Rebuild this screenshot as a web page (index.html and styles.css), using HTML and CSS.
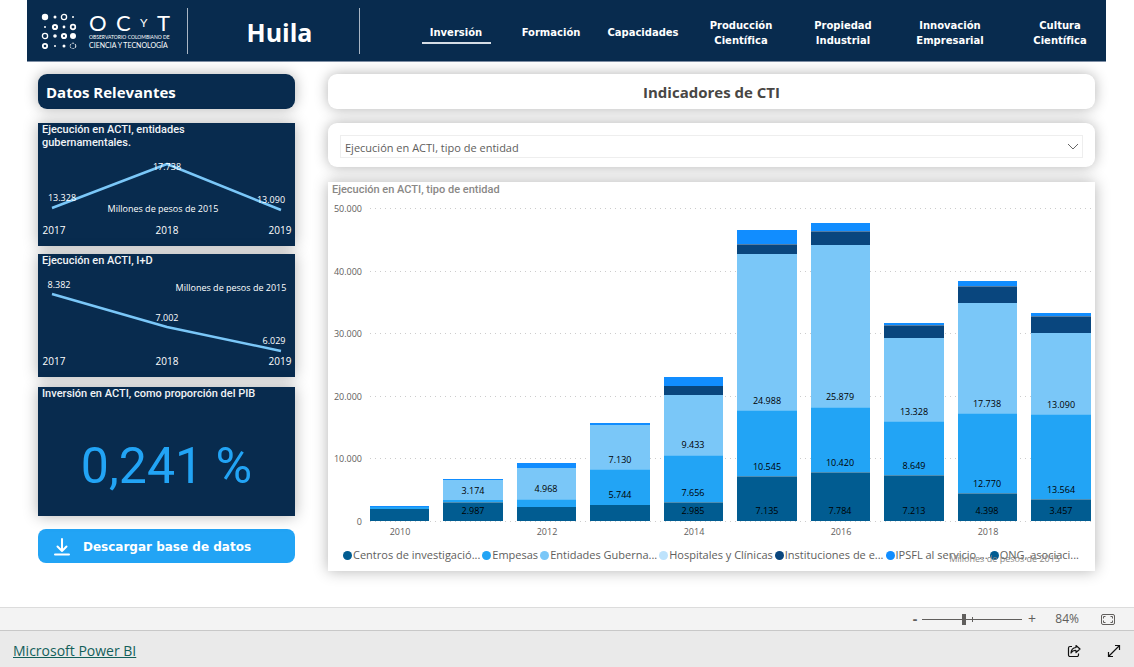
FILE: index.html
```html
<!DOCTYPE html>
<html lang="es">
<head>
<meta charset="utf-8">
<title>Huila - Indicadores de CTI</title>
<link rel="stylesheet" href="styles.css">
</head>
<body>
<div class="report">
  <header class="header">
    <div class="brand">
      <svg class="brand-dots" viewBox="0 0 36 36" aria-hidden="true">
        <g fill="#fff">
          <circle cx="4" cy="4" r="3.2"/><circle cx="14" cy="4" r="1.5"/><circle cx="32" cy="4" r="1"/>
          <circle cx="4" cy="14" r="1"/><circle cx="23" cy="14" r="1.4"/>
          <circle cx="14" cy="23" r="1.8"/><circle cx="32" cy="23" r="3"/>
          <circle cx="14" cy="33" r="1"/><circle cx="23" cy="33" r="1.5"/>
        </g>
        <g fill="none" stroke="#fff">
          <circle cx="23" cy="4" r="2.6" stroke-width="1.3"/>
          <circle cx="14" cy="14" r="2.1" stroke-width="2"/><circle cx="32" cy="14" r="2.3" stroke-width="1.7"/>
          <circle cx="4" cy="23" r="2.6" stroke-width="1.3"/><circle cx="23" cy="23" r="2.1" stroke-width="2"/>
          <circle cx="4" cy="33" r="2.2" stroke-width="1.8"/><circle cx="32" cy="33" r="2.8" stroke-width="1" stroke-dasharray="2 1"/>
        </g>
      </svg>
      <div class="brand-text">
        <div class="brand-name"><span>O</span><span>C</span><span class="small">Y</span><span>T</span></div>
        <div class="brand-line1">OBSERVATORIO COLOMBIANO DE</div>
        <div class="brand-line2">CIENCIA Y TECNOLOGÍA</div>
      </div>
    </div>
    <h1 class="region">Huila</h1>
    <nav class="nav">
      <a class="active" href="#inversion">Inversión</a>
      <a href="#formacion">Formación</a>
      <a href="#capacidades">Capacidades</a>
      <a href="#produccion">Producción<br>Científica</a>
      <a href="#propiedad">Propiedad<br>Industrial</a>
      <a href="#innovacion">Innovación<br>Empresarial</a>
      <a href="#cultura">Cultura<br>Científica</a>
    </nav>
  </header>

  <main class="content">
    <section class="side">
      <h2 class="side-title">Datos Relevantes</h2>

      <article class="card trend">
        <h3>Ejecución en ACTI, entidades<br>gubernamentales.</h3>
        <svg viewBox="0 0 257 123" role="img" aria-label="Ejecución en ACTI, entidades gubernamentales">
          <polyline class="line" points="14,85 129,41 243,87"/>
          <text x="24" y="78">13.328</text>
          <text x="129" y="47">17.738</text>
          <text x="233" y="80">13.090</text>
          <text x="125" y="89">Millones de pesos de 2015</text>
          <g class="years"><text x="16" y="111">2017</text><text x="129" y="111">2018</text><text x="242" y="111">2019</text></g>
        </svg>
      </article>

      <article class="card trend">
        <h3>Ejecución en ACTI, I+D</h3>
        <svg viewBox="0 0 257 123" role="img" aria-label="Ejecución en ACTI, I+D">
          <polyline class="line" points="14,40 129,73 243,97"/>
          <text x="21" y="34">8.382</text>
          <text x="129" y="67">7.002</text>
          <text x="236" y="90">6.029</text>
          <text x="193" y="37">Millones de pesos de 2015</text>
          <g class="years"><text x="16" y="111">2017</text><text x="129" y="111">2018</text><text x="242" y="111">2019</text></g>
        </svg>
      </article>

      <article class="card figure">
        <h3>Inversión en ACTI, como proporción del PIB</h3>
        <p>0,241 %</p>
      </article>

      <button class="download" type="button">
        <svg viewBox="0 0 16 18" aria-hidden="true"><path d="M8 1v12M3.500 8.500 8 13l4.500-4.500M1 16.500h14" fill="none" stroke="#fff" stroke-width="2" stroke-linecap="round" stroke-linejoin="round"/></svg>
        Descargar base de datos
      </button>
    </section>

    <section class="main">
      <h2 class="main-title">Indicadores de CTI</h2>

      <div class="slicer">
        <select aria-label="Indicador"><option>Ejecución en ACTI, tipo de entidad</option></select>
        <svg viewBox="0 0 12 8" aria-hidden="true"><path d="M1 1l5 5 5-5" fill="none" stroke="#666" stroke-width="1"/></svg>
      </div>

      <article class="chart">
        <h3>Ejecución en ACTI, tipo de entidad</h3>
        <svg viewBox="0 16 767 345" role="img" aria-label="Ejecución en ACTI por tipo de entidad, 2010 a 2019">
          <g class="grid">
            <path d="M42 26.500H763M42 89.500H763M42 151.500H763M42 214.500H763M42 276.500H763M42 339.500H763"/>
          </g>
          <g class="axis end">
            <text x="34" y="30">50.000</text><text x="34" y="93">40.000</text><text x="34" y="155">30.000</text>
            <text x="34" y="218">20.000</text><text x="34" y="280">10.000</text><text x="34" y="343">0</text>
          </g>
          <g class="centros">
            <rect x="42" y="327" width="59" height="12"/><rect x="115" y="320" width="60" height="19"/>
            <rect x="189" y="325" width="59" height="14"/><rect x="262" y="323" width="60" height="16"/>
            <rect x="336" y="320" width="59" height="19"/><rect x="409" y="294" width="60" height="45"/>
            <rect x="483" y="290" width="59" height="49"/><rect x="556" y="293" width="60" height="46"/>
            <rect x="630" y="311" width="59" height="28"/><rect x="703" y="317" width="60" height="22"/>
          </g>
          <g class="empresas">
            <rect x="42" y="325" width="59" height="2"/><rect x="115" y="318" width="60" height="2"/>
            <rect x="189" y="317" width="59" height="8"/><rect x="262" y="287" width="60" height="36"/>
            <rect x="336" y="273" width="59" height="47"/><rect x="409" y="228" width="60" height="66"/>
            <rect x="483" y="225" width="59" height="65"/><rect x="556" y="239" width="60" height="54"/>
            <rect x="630" y="231" width="59" height="80"/><rect x="703" y="232" width="60" height="85"/>
          </g>
          <g class="gobierno">
            <rect x="115" y="298" width="60" height="20"/>
            <rect x="189" y="286" width="59" height="31"/><rect x="262" y="243" width="60" height="44"/>
            <rect x="336" y="213" width="59" height="60"/><rect x="409" y="72" width="60" height="156"/>
            <rect x="483" y="63" width="59" height="162"/><rect x="556" y="156" width="60" height="83"/>
            <rect x="630" y="121" width="59" height="110"/><rect x="703" y="151" width="60" height="81"/>
          </g>
          <g class="educacion">
            <rect x="336" y="204" width="59" height="9"/><rect x="409" y="62" width="60" height="10"/>
            <rect x="483" y="49" width="59" height="14"/><rect x="556" y="143" width="60" height="13"/>
            <rect x="630" y="104" width="59" height="17"/><rect x="703" y="134" width="60" height="17"/>
          </g>
          <g class="ipsfl">
            <rect x="42" y="324" width="59" height="1"/><rect x="115" y="297" width="60" height="1"/>
            <rect x="189" y="281" width="59" height="5"/><rect x="262" y="241" width="60" height="2"/>
            <rect x="336" y="195" width="59" height="9"/><rect x="409" y="48" width="60" height="14"/>
            <rect x="483" y="41" width="59" height="8"/><rect x="556" y="141" width="60" height="2"/>
            <rect x="630" y="99" width="59" height="5"/><rect x="703" y="131" width="60" height="3"/>
          </g>
          <g class="seams">
            <path d="M115 320.500h60M189 317.500h59M262 287.500h60M336 273.500h59M409 228.500h60M483 225.500h59M556 239.500h60M630 231.500h59M703 232.500h60"/>
            <path d="M336 320.500h59M409 294.500h60M483 290.500h59M556 293.500h60M630 311.500h59M703 317.500h60"/>
            <path d="M409 62.500h60M483 49.500h59M556 143.500h60M630 104.500h59M703 134.500h60"/>
          </g>
          <g class="values">
            <text x="145" y="312">3.174</text><text x="145" y="332">2.987</text>
            <text x="218" y="310">4.968</text>
            <text x="292" y="281">7.130</text><text x="292" y="316">5.744</text>
            <text x="365" y="266">9.433</text><text x="365" y="314">7.656</text><text x="365" y="332">2.985</text>
            <text x="439" y="222">24.988</text><text x="439" y="288">10.545</text><text x="439" y="332">7.135</text>
            <text x="512" y="218">25.879</text><text x="512" y="284">10.420</text><text x="512" y="332">7.784</text>
            <text x="586" y="233">13.328</text><text x="586" y="287">8.649</text><text x="586" y="332">7.213</text>
            <text x="659" y="225">17.738</text><text x="659" y="305">12.770</text><text x="659" y="332">4.398</text>
            <text x="733" y="226">13.090</text><text x="733" y="311">13.564</text><text x="733" y="332">3.457</text>
          </g>
          <g class="axis">
            <text x="72" y="353">2010</text><text x="219" y="353">2012</text><text x="366" y="353">2014</text>
            <text x="513" y="353">2016</text><text x="660" y="353">2018</text>
          </g>
        </svg>
        <ul class="legend">
          <li class="k-centros">Centros de investigació...</li>
          <li class="k-empresas">Empesas</li>
          <li class="k-gobierno">Entidades Guberna...</li>
          <li class="k-hospitales">Hospitales y Clínicas</li>
          <li class="k-educacion">Instituciones de e...</li>
          <li class="k-ipsfl">IPSFL al servicio ...</li>
          <li class="k-centros">ONG, asociaci...</li>
        </ul>
        <p class="note">Millones de pesos de 2015</p>
      </article>
    </section>
  </main>
</div>

<div class="zoombar">
  <button type="button" aria-label="Alejar">-</button>
  <input type="range" min="0" max="100" value="42" aria-label="Zoom">
  <button type="button" aria-label="Acercar">+</button>
  <span class="percent">84%</span>
  <button class="fit" type="button" aria-label="Ajustar a la página">
    <svg viewBox="0 0 14 11"><g fill="none" stroke="#605e5c"><rect x=".5" y=".5" width="13" height="10" rx="1.500"/><path d="M2.500 4.500v-2h2M9.500 2.500h2v2M11.500 6.500v2h-2M4.500 8.500h-2v-2"/></g></svg>
  </button>
</div>
<footer class="footer">
  <a href="#powerbi">Microsoft Power BI</a>
  <div class="actions">
    <button type="button" aria-label="Compartir">
      <svg viewBox="0 0 14 14"><g fill="none" stroke="#111" stroke-width="1.200" stroke-linejoin="round"><path d="M5 2.500H3A1.500 1.500 0 0 0 1.500 4v7A1.500 1.500 0 0 0 3 12.500h7a1.500 1.500 0 0 0 1.500-1.500V9.500"/><path d="M9 1.500 13 5 9 8.500v-2C6.800 6.300 5.200 7 4 9 4.200 5.800 6 3.800 9 3.500z"/></g></svg>
    </button>
    <button type="button" aria-label="Pantalla completa">
      <svg viewBox="0 0 14 14"><path d="M1.500 12.500l11-11M8 1.500h4.500V6M1.500 8v4.500H6" fill="none" stroke="#111" stroke-width="1.200"/></svg>
    </button>
  </div>
</footer>
</body>
</html>
```
FILE: styles.css
```css
* { box-sizing: border-box; margin: 0; padding: 0; }

body {
  display: flex;
  flex-direction: column;
  min-height: 100vh;
  background: #fff;
  color: #605e5c;
  font-family: "Open Sans", "Noto Sans", sans-serif;
}

button { border: 0; background: none; color: inherit; font: inherit; }

.report { flex: 1; padding: 0 28px 32px 27px; }

/* Header */
.header {
  display: grid;
  grid-template-columns: 161px 172px 1fr;
  align-items: center;
  height: 62px;
  background: #082b4e;
  border-bottom: 1px solid #7f8fa5;
  color: #fff;
}

.brand, .region {
  display: flex;
  align-items: center;
  height: 46px;
  border-right: 1px solid #a9b6c4;
}

.brand { gap: 12px; padding-left: 14px; }
.brand-dots { width: 36px; height: 36px; flex: none; }
.brand-text { width: 84px; white-space: nowrap; }

.brand-name {
  display: flex;
  align-items: center;
  justify-content: space-between;
  padding-right: 3px;
  font: 22px/22px Lato, sans-serif;
}
.brand-name .small { font-size: 12px; }
.brand-line1 { font: 5px/7px Lato, sans-serif; }
.brand-line2 { font: 7px/8px Lato, sans-serif; }

.region { justify-content: center; font-size: 25px; font-weight: 700; padding: 2px 0 0 12px; }

.nav {
  display: grid;
  grid-template-columns: 84fr 106fr 78fr 118fr 86fr 128fr 92fr;
  align-items: center;
  padding: 4px 0 0 54px;
}
.nav a {
  color: #fff;
  font: 700 10px/15px "DejaVu Sans", sans-serif;
  text-align: center;
  text-decoration: none;
}
.nav .active::after {
  content: "";
  display: block;
  width: 69px;
  height: 2px;
  margin: 2px auto -4px;
  background: #d5dde5;
}

/* Columns */
.content {
  display: grid;
  grid-template-columns: minmax(0, 257fr) minmax(0, 767fr);
  gap: 33px;
  align-items: start;
  padding: 12px 11px 0;
}

.side, .main { display: flex; flex-direction: column; }

.side-title, .main-title {
  height: 35px;
  border-radius: 9px;
  box-shadow: 0 0 14px rgba(0, 0, 0, .3);
  font-size: 15px;
  line-height: 37px;
}
.side-title { padding-left: 8px; background: #082b4e; color: #fff; margin-bottom: 14px; }
.main-title { background: #fff; color: #484644; text-align: center; margin-bottom: 14px; }

/* Side cards */
.card {
  position: relative;
  margin-bottom: 8px;
  background: #082b4e;
  color: #fff;
  box-shadow: 0 0 14px rgba(0, 0, 0, .3);
}
.card h3 {
  padding: 0 4px;
  font: 500 11px/13px Roboto, sans-serif;
  color: #f0f3f6;
}
.trend h3 { position: absolute; top: 0; left: 0; }
.trend svg { display: block; width: 100%; }
.trend text { fill: #fff; font-size: 9px; text-anchor: middle; }
.trend .years text { font-size: 10px; }
.line { fill: none; stroke: #7ac7f8; stroke-width: 2.5; stroke-linejoin: round; }

.figure { height: 129px; margin: 2px 0 13px; }
.figure p {
  padding-top: 32px;
  color: #22a4f5;
  font: 50px/68px Roboto, sans-serif;
  text-align: center;
}

.download {
  display: flex;
  align-items: center;
  gap: 13px;
  height: 34px;
  padding: 2px 0 0 16px;
  border-radius: 8px;
  background: #22a4f5;
  color: #fff;
  font: 700 12px/32px "DejaVu Sans", sans-serif;
}
.download svg { width: 16px; height: 18px; }

/* Slicer */
.slicer {
  position: relative;
  height: 44px;
  padding: 12px;
  margin-bottom: 15px;
  background: #fff;
  border-radius: 9px;
  box-shadow: 0 0 14px rgba(0, 0, 0, .3);
}
.slicer select {
  display: block;
  width: 100%;
  height: 23px;
  padding: 1px 4px 0;
  appearance: none;
  border: 1px solid #eee;
  background: #fff;
  color: #605e5c;
  font: 11px "Open Sans", sans-serif;
}
.slicer svg { position: absolute; right: 16px; top: 20px; width: 12px; height: 8px; pointer-events: none; }

/* Stacked columns */
.chart { position: relative; background: #fff; box-shadow: 0 0 14px rgba(0, 0, 0, .3); }
.chart h3 { padding: 0 4px; font: 500 11px/16px Roboto, sans-serif; color: #8a8886; }
.chart svg { display: block; width: 100%; }
.chart text { font-size: 9px; text-anchor: middle; fill: #605e5c; }
.chart .end text { text-anchor: end; }
.chart .values text { fill: #000; }
.grid path { stroke: #ccc; stroke-dasharray: 1 4; }
.seams path { stroke: #fff; stroke-opacity: .3; }

.centros { fill: #015c91; }
.empresas { fill: #22a4f5; }
.gobierno { fill: #7ac7f8; }
.educacion { fill: #09467e; }
.ipsfl { fill: #118dff; }

.legend {
  display: flex;
  gap: 2px;
  height: 28px;
  padding: 4px 15px 0;
  list-style: none;
  font-size: 11px;
  line-height: 16px;
  white-space: nowrap;
}
.legend li { display: flex; align-items: center; gap: 1px; height: 16px; }
.legend li::before { content: ""; width: 9px; height: 9px; border-radius: 50%; }
.legend .k-centros::before { background: #015c91; }
.legend .k-empresas::before { background: #22a4f5; }
.legend .k-gobierno::before { background: #7ac7f8; }
.legend .k-hospitales::before { background: #bde3fc; }
.legend .k-educacion::before { background: #09467e; }
.legend .k-ipsfl::before { background: #118dff; }

.note { position: absolute; right: 35px; bottom: 6px; font-size: 9px; line-height: 12px; color: #8a8886; }

/* Zoom bar */
.zoombar {
  display: flex;
  align-items: center;
  justify-content: flex-end;
  height: 23px;
  padding-right: 19px;
  background: #f3f3f3;
  border-top: 1px solid #dcdcdc;
  font-size: 12px;
  line-height: 22px;
}
.zoombar button { width: 20px; font-size: 14px; }
.zoombar button:first-child { width: 14px; font-weight: 700; }
.zoombar input {
  width: 100px;
  height: 12px;
  appearance: none;
  background:
    linear-gradient(#605e5c, #605e5c) 50px 50% / 1px 5px no-repeat,
    linear-gradient(#605e5c, #605e5c) 0 50% / 100% 1px no-repeat;
}
.zoombar input::-webkit-slider-thumb { appearance: none; width: 4px; height: 11px; background: #605e5c; }
.percent { width: 37px; text-align: right; }
.zoombar .fit { width: 14px; height: 11px; margin-left: 22px; }
.fit svg { display: block; }

/* Footer */
.footer {
  display: flex;
  align-items: center;
  justify-content: space-between;
  height: 37px;
  padding: 3px 13px 0;
  background: #eaeaea;
  border-top: 1px solid #c8c8c8;
}
.footer a { color: #135f5a; font-size: 14px; }
.actions { display: flex; gap: 26px; }
.actions svg { display: block; width: 14px; height: 14px; }
```
